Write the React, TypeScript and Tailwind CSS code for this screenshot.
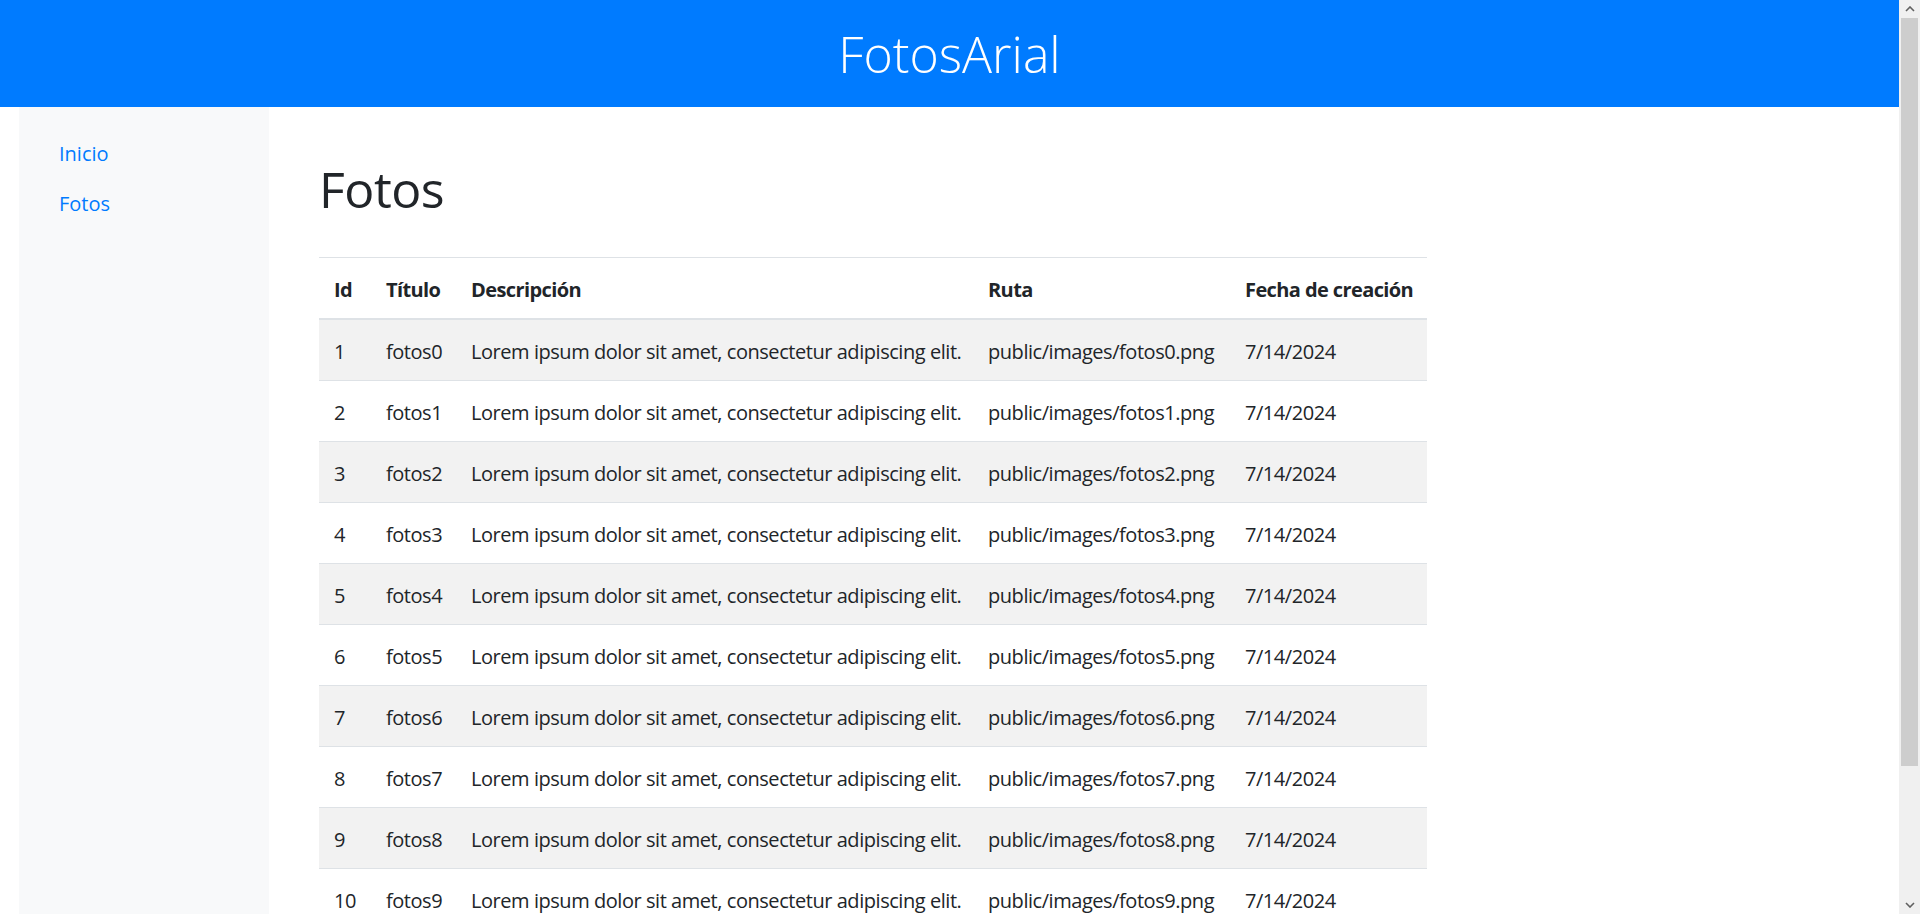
const fotos = Array.from({ length: 10 }, (_, i) => ({
  id: i + 1,
  titulo: `fotos${i}`,
  descripcion: "Lorem ipsum dolor sit amet, consectetur adipiscing elit.",
  ruta: `public/images/fotos${i}.png`,
  fecha: "7/14/2024",
}));

function Scrollbar() {
  return (
    <div className="fixed right-0 top-0 flex h-screen w-[21px] flex-col bg-[#f0f0f0]">
      <div className="flex h-[18px] items-center justify-center">
        <svg width="10" height="6" viewBox="0 0 10 6">
          <path d="M1 5 L5 1 L9 5" fill="none" stroke="#606060" strokeWidth="1.6" />
        </svg>
      </div>
      <div className="mx-[2px] h-[748px] bg-[#cdcdcd]" />
      <div className="flex-1" />
      <div className="flex h-[18px] items-center justify-center">
        <svg width="10" height="6" viewBox="0 0 10 6">
          <path d="M1 1 L5 5 L9 1" fill="none" stroke="#606060" strokeWidth="1.6" />
        </svg>
      </div>
    </div>
  );
}

export default function App() {
  return (
    <div className="min-h-screen bg-white pr-[21px] font-['Open_Sans',sans-serif] text-[20px] leading-[30px] text-[#212529]">
      <header className="flex h-[107px] items-center justify-center bg-[#007bff]">
        <h1 className="text-[50px] font-light leading-[60px] text-white">FotosArial</h1>
      </header>

      <div className="flex px-[19px]">
        <aside className="min-h-[966px] w-[250px] shrink-0 bg-[#f8f9fa] pt-[22px]">
          <nav className="flex flex-col">
            <a href="#" className="px-[40px] py-[10px] text-[#007bff]">
              Inicio
            </a>
            <a href="#" className="px-[40px] py-[10px] text-[#007bff]">
              Fotos
            </a>
          </nav>
        </aside>

        <main className="flex-1 pl-[50px] pt-[52px]">
          <h1 className="mb-[38px] text-[50px] font-normal leading-[60px] tracking-[-0.5px]">Fotos</h1>

          <table className="w-[1108px] table-fixed border-collapse whitespace-nowrap tracking-[-0.45px]">
            <colgroup>
              <col className="w-[52px]" />
              <col className="w-[85px]" />
              <col className="w-[517px]" />
              <col className="w-[257px]" />
              <col className="w-[197px]" />
            </colgroup>
            <thead>
              <tr className="border-t border-b-2 border-t-[#dee2e6] border-b-[#dee2e6]">
                <th className="px-[15px] pb-[13px] pt-[17px] text-left font-bold tracking-[-0.6px]">Id</th>
                <th className="px-[15px] pb-[13px] pt-[17px] text-left font-bold tracking-[-0.6px]">Título</th>
                <th className="px-[15px] pb-[13px] pt-[17px] text-left font-bold tracking-[-0.6px]">Descripción</th>
                <th className="px-[15px] pb-[13px] pt-[17px] text-left font-bold tracking-[-0.6px]">Ruta</th>
                <th className="px-[15px] pb-[13px] pt-[17px] text-left font-bold tracking-[-0.6px]">Fecha de creación</th>
              </tr>
            </thead>
            <tbody>
              {fotos.map((f, i) => (
                <tr
                  key={f.id}
                  className={`border-t border-[#dee2e6] ${i % 2 === 0 ? "bg-[#f2f2f2]" : "bg-white"}`}
                >
                  <td className="px-[15px] pb-[13px] pt-[17px]">{f.id}</td>
                  <td className="px-[15px] pb-[13px] pt-[17px]">{f.titulo}</td>
                  <td className="px-[15px] pb-[13px] pt-[17px]">{f.descripcion}</td>
                  <td className="px-[15px] pb-[13px] pt-[17px]">{f.ruta}</td>
                  <td className="px-[15px] pb-[13px] pt-[17px]">{f.fecha}</td>
                </tr>
              ))}
            </tbody>
          </table>
        </main>
      </div>
      <Scrollbar />
    </div>
  );
}
